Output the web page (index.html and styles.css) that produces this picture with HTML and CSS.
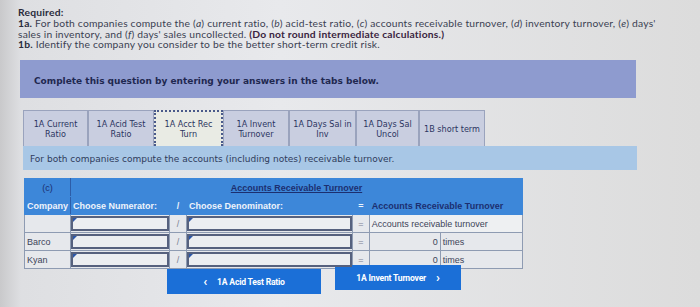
FILE: index.html
```html
<!DOCTYPE html>
<html lang="en">

<head>
    <meta charset="UTF-8">
    <title>Required</title>
    <link rel="stylesheet" href="styles.css">
</head>

<body>
    <div class="required">
        <p><b>Required:</b></p>
        <p><b>1a.</b> For both companies compute the (<i>a</i>) current ratio, (<i>b</i>) acid-test ratio, (<i>c</i>) accounts receivable turnover, (<i>d</i>) inventory turnover, (<i>e</i>) days' sales in inventory, and (<i>f</i>) days' sales uncollected. <b class="warn">(Do not round intermediate calculations.)</b></p>
        <p><b>1b.</b> Identify the company you consider to be the better short-term credit risk.</p>
    </div>

    <div class="panel">
        <div class="banner">Complete this question by entering your answers in the tabs below.</div>

        <div class="tabs">
            <div class="tab" style="width:65px">1A Current Ratio</div>
            <div class="tab" style="width:66px">1A Acid Test Ratio</div>
            <div class="tab active" style="width:69px">1A Acct Rec Turn</div>
            <div class="tab" style="width:66px">1A Invent Turnover</div>
            <div class="tab" style="width:67px">1A Days Sal in Inv</div>
            <div class="tab" style="width:63px">1A Days Sal Uncol</div>
            <div class="tab" style="width:66px">1B short term</div>
        </div>

        <div class="info">For both companies compute the accounts (including notes) receivable turnover.</div>

        <table class="grid">
            <tr class="head">
                <td class="c-co mark">(c)</td>
                <td colspan="6" class="title">Accounts Receivable Turnover</td>
            </tr>
            <tr class="head">
                <td class="c-co">Company</td>
                <td class="c-num">Choose Numerator:</td>
                <td class="c-op">/</td>
                <td class="c-den">Choose Denominator:</td>
                <td class="c-op">=</td>
                <td colspan="2" class="result">Accounts Receivable Turnover</td>
            </tr>
            <tr>
                <td class="c-co"></td>
                <td class="c-num"><div class="sel"></div></td>
                <td class="c-op">/</td>
                <td class="c-den"><div class="sel"></div></td>
                <td class="c-op">=</td>
                <td colspan="2" class="label">Accounts receivable turnover</td>
            </tr>
            <tr>
                <td class="c-co">Barco</td>
                <td class="c-num"><div class="sel"></div></td>
                <td class="c-op">/</td>
                <td class="c-den"><div class="sel"></div></td>
                <td class="c-op">=</td>
                <td class="c-val">0</td>
                <td class="c-unit">times</td>
            </tr>
            <tr>
                <td class="c-co">Kyan</td>
                <td class="c-num"><div class="sel"></div></td>
                <td class="c-op">/</td>
                <td class="c-den"><div class="sel"></div></td>
                <td class="c-op">=</td>
                <td class="c-val">0</td>
                <td class="c-unit">times</td>
            </tr>
        </table>

        <div class="nav">
            <a href="#" class="btn prev"><span class="arrow">&lsaquo;</span> 1A Acid Test Ratio</a>
            <a href="#" class="btn next">1A Invent Turnover <span class="arrow">&rsaquo;</span></a>
        </div>
    </div>
</body>

</html>
```

FILE: styles.css
```css
body {
    margin: 0;
    width: 700px;
    height: 307px;
    overflow: hidden;
    background: linear-gradient(90deg, #c9c9cb 0, #dedfe2 3%, #e8e9ec 40%, #dcdcdc 100%);
    font-family: 'Lato', sans-serif;
    color: #3b3f52;
}

.required {
    padding: 7px 0 0 18px;
    width: 662px;
    font-size: 10.3px;
    line-height: 10.8px;
    letter-spacing: 0.2px;
}

.required p {
    margin: 0;
}

.required b {
    color: #2a2c3c;
}

.required .warn {
    color: #3a2440;
}

.panel {
    margin: 10px 0 0 20px;
}

.banner {
    width: 616px;
    height: 38px;
    box-sizing: border-box;
    padding: 16px 0 0 14px;
    background-color: #8e9bcf;
    color: #1f2850;
    font-family: 'DejaVu Sans', sans-serif;
    font-weight: bold;
    font-size: 9px;
}

.tabs {
    display: flex;
    margin: 12px 0 0 3px;
    height: 36px;
}

.tab {
    box-sizing: border-box;
    display: flex;
    align-items: center;
    justify-content: center;
    text-align: center;
    padding: 0 1px;
    background-color: #c9cee0;
    border: 1px solid #9aa3bd;
    border-bottom: none;
    color: #2b3560;
    font-family: 'DejaVu Sans', sans-serif;
    font-size: 8.1px;
    line-height: 10px;
}

.tab.active {
    background-color: #e9ebe4;
    border: 2px dotted #4a5a8a;
    border-bottom: none;
}

.info {
    margin-left: 3px;
    width: 614px;
    height: 24px;
    box-sizing: border-box;
    padding: 8px 0 0 7px;
    background-color: #a8c7e6;
    color: #2f3b5b;
    font-family: 'DejaVu Sans', sans-serif;
    font-size: 9px;
}

.grid {
    margin: 8px 0 0 4px;
    border-collapse: collapse;
    width: 499px;
    font-family: 'Liberation Sans', sans-serif;
    font-size: 9px;
    color: #3d4458;
}

.grid td {
    border: 1px solid #8e9bb2;
    padding: 0 2px;
    height: 17px;
    background-color: #e6e8ec;
}

.grid .head td {
    background-color: #3d87d9;
    border-color: #3d87d9;
    color: #eef3fb;
    font-weight: bold;
}

.grid .head td.c-co {
    border-right-color: #2d5da8;
}

.grid .head td.mark {
    text-align: center;
    font-weight: normal;
    color: #1c2f70;
}

.grid .title {
    text-align: center;
    color: #1c2f70 !important;
    text-decoration: underline;
}

.grid .result {
    color: #1c2f70 !important;
}

.grid .label {
    background-color: #eef0f2;
}

.c-co {
    width: 39px;
}

.c-num {
    width: 96px;
}

.c-den {
    width: 165px;
}

.c-op {
    width: 12px;
    text-align: center;
    color: #7a8092;
}

.c-val {
    width: 68px;
    text-align: right;
}

.c-unit {
    width: 79px;
}

.grid .c-num,
.grid .c-den {
    padding: 0;
}

.grid .head .c-num,
.grid .head .c-den {
    padding: 0 2px;
}

.sel {
    position: relative;
    height: 15px;
    box-sizing: border-box;
    border: 2px solid #56617e;
    background-color: #eceef1;
}

.sel::before {
    content: "";
    position: absolute;
    top: 0;
    left: 0;
    border-top: 4px solid #2c57a8;
    border-right: 4px solid transparent;
}

.nav {
    display: flex;
    gap: 14px;
    margin: -4px 0 0 147px;
    align-items: flex-start;
}

.btn {
    display: flex;
    align-items: center;
    justify-content: center;
    gap: 10px;
    height: 25px;
    background-color: #1b6fd7;
    color: #fff;
    text-decoration: none;
    font-family: 'Roboto', sans-serif;
    font-weight: bold;
    font-size: 8.6px;
    letter-spacing: -0.2px;
}

.btn .arrow {
    font-size: 13px;
    line-height: 10px;
}

.prev {
    width: 154px;
    margin-top: 4px;
}

.next {
    width: 126px;
}
```
